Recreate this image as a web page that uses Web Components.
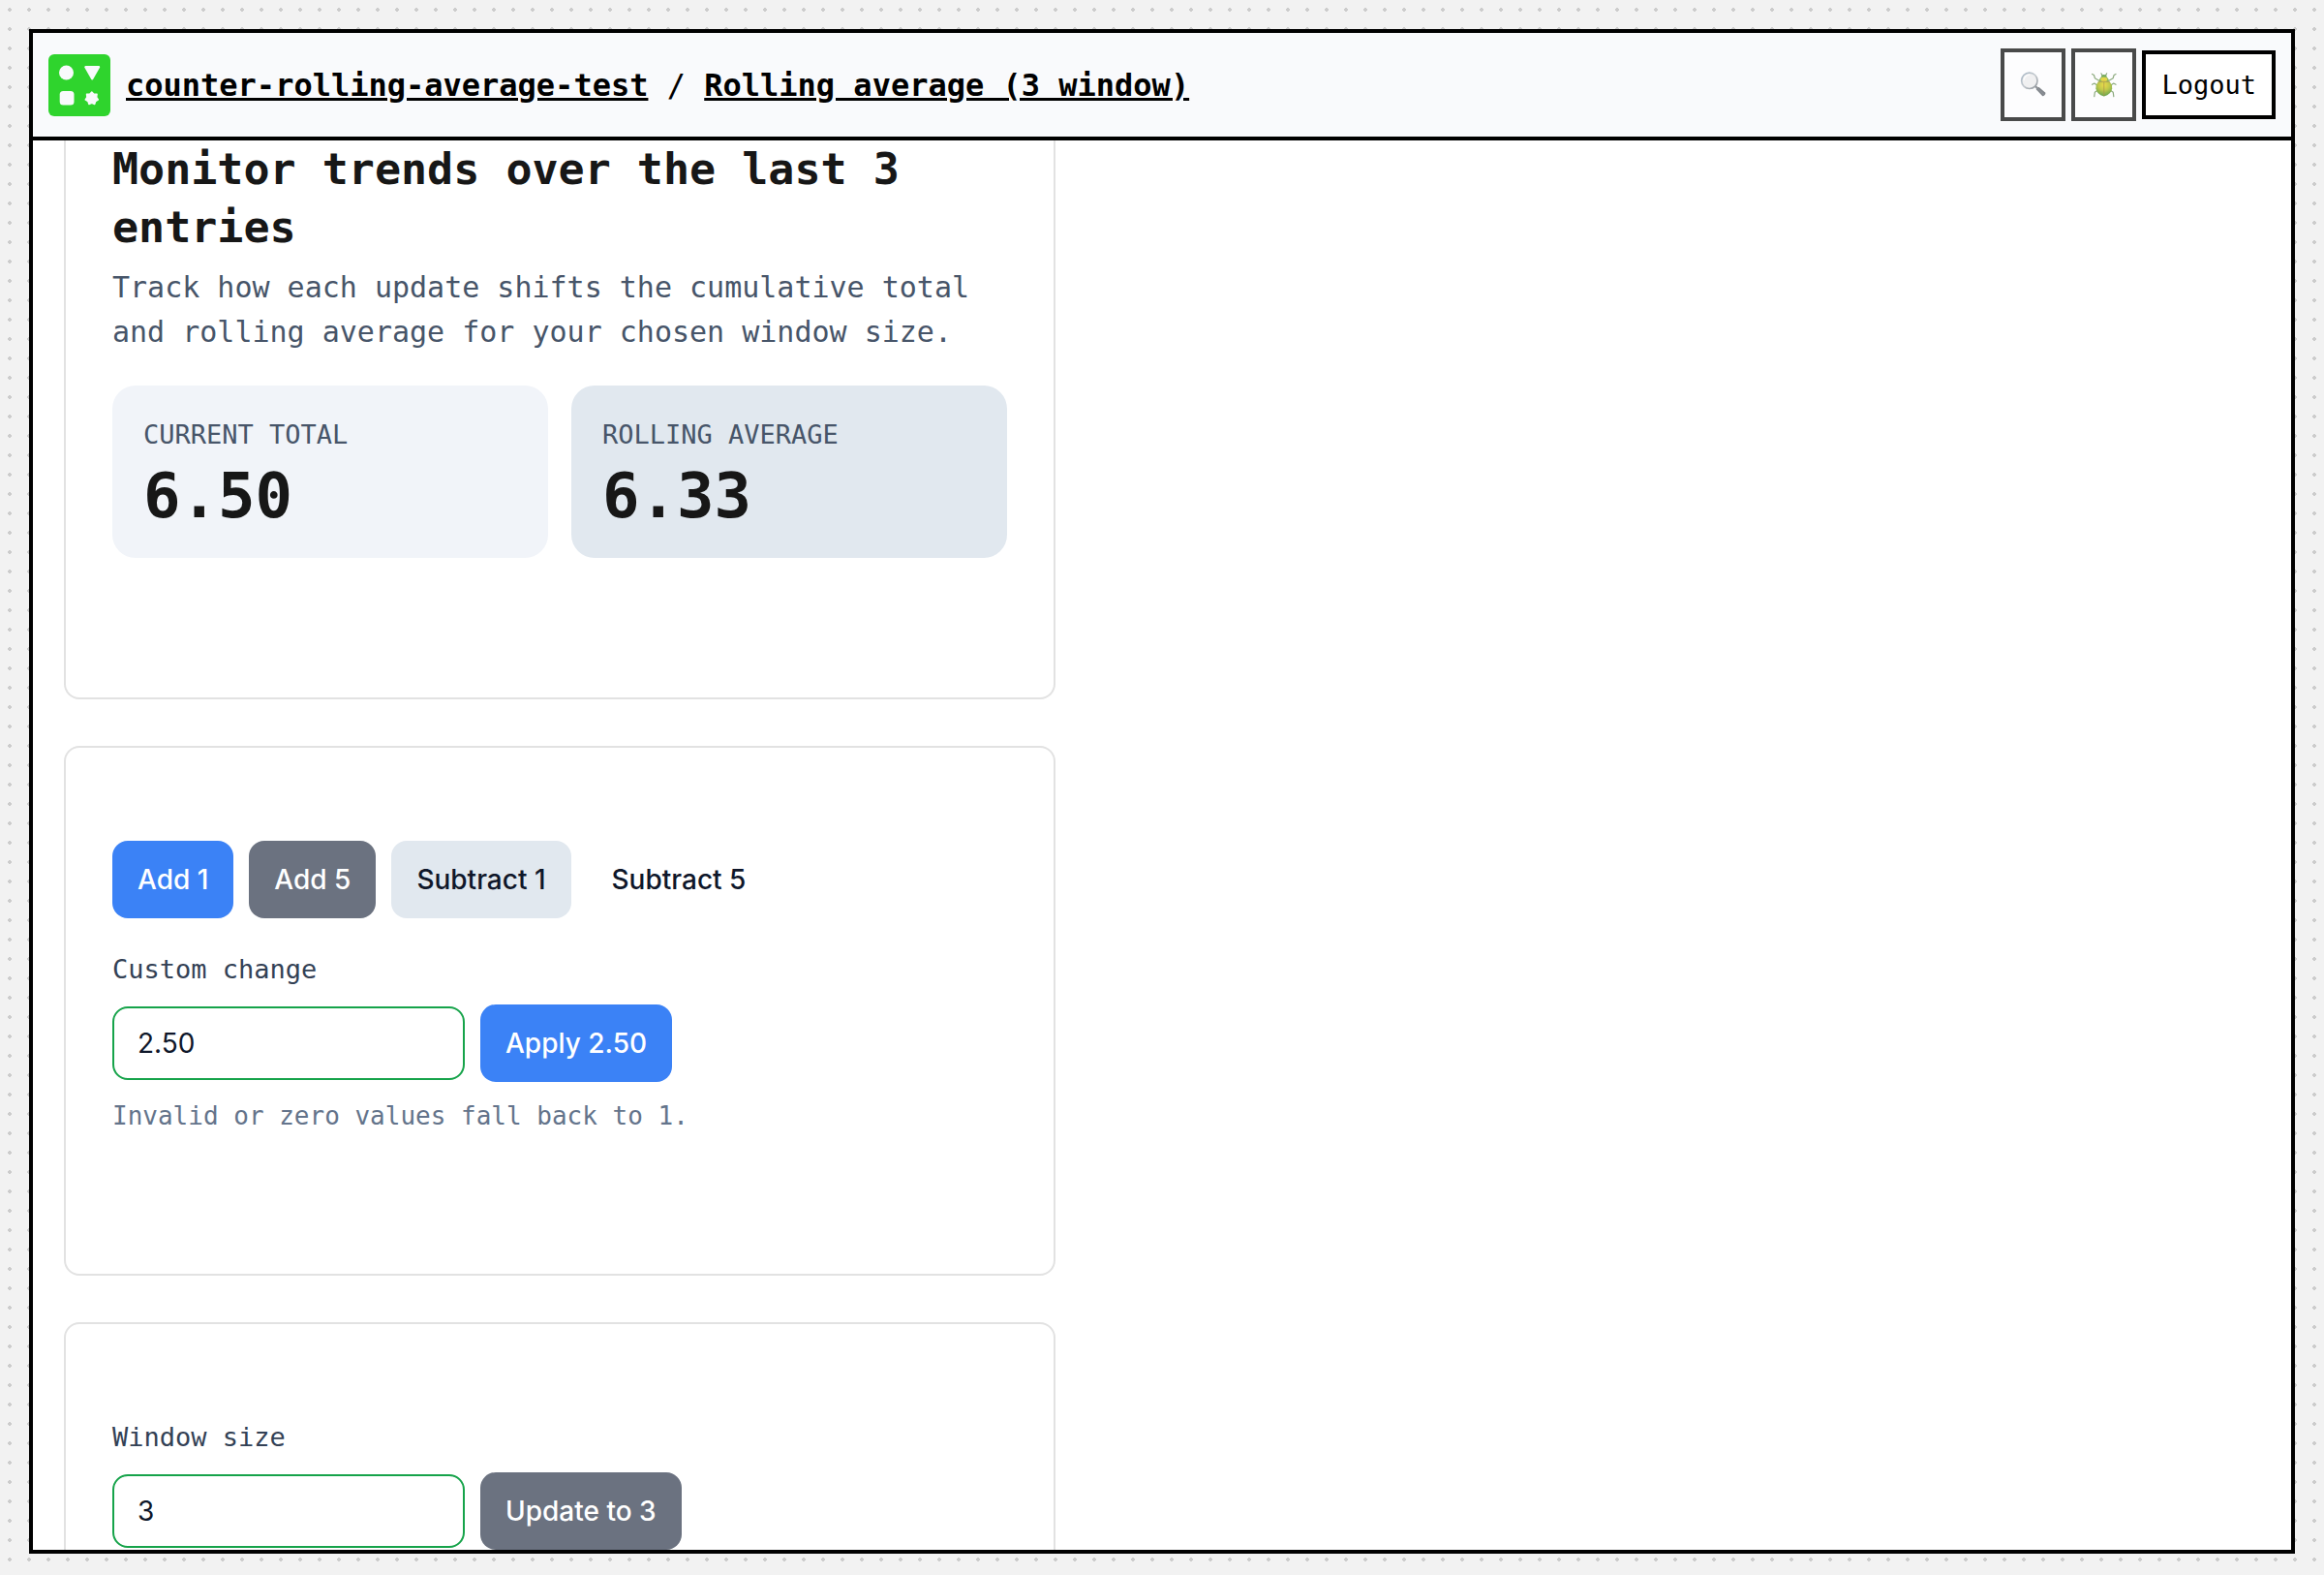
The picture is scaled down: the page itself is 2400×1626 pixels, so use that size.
<!DOCTYPE html>
<html lang="en">
<head>
<meta charset="utf-8">
<title>Rolling average (3 window)</title>
<style>
  body { margin: 0; font-family: "DejaVu Sans Mono", "Liberation Mono", monospace; color: #171717; }
</style>
</head>
<body>
<app-frame>
  <app-header slot="header"></app-header>
  <app-card continued>
    <summary-intro>
      <span slot="title">Monitor trends over the last 3 entries</span>
      <span slot="text">Track how each update shifts the cumulative total and rolling average for your chosen window size.</span>
    </summary-intro>
    <stat-row>
      <stat-tile label="Current total" value="6.50"></stat-tile>
      <stat-tile label="Rolling average" value="6.33" strong></stat-tile>
    </stat-row>
  </app-card>
  <app-card>
    <button-row>
      <ui-button variant="primary">Add 1</ui-button>
      <ui-button variant="secondary">Add 5</ui-button>
      <ui-button variant="soft">Subtract 1</ui-button>
      <ui-button variant="ghost">Subtract 5</ui-button>
    </button-row>
    <value-field label="Custom change" value="2.50" hint="Invalid or zero values fall back to 1.">
      <ui-button variant="primary">Apply 2.50</ui-button>
    </value-field>
  </app-card>
  <app-card>
    <value-field label="Window size" value="3">
      <ui-button variant="secondary">Update to 3</ui-button>
    </value-field>
  </app-card>
</app-frame>

<script>
const define = (name, render) => customElements.define(name, class extends HTMLElement {
  connectedCallback() {
    if (this.shadowRoot) return;
    this.attachShadow({ mode: "open" }).innerHTML = "<style>*{box-sizing:border-box}:host{display:block;box-sizing:border-box}</style>" + render(this);
  }
});

define("app-frame", () => `
  <style>
    :host {
      display: flex; height: 100vh; padding: 30px 30px 22px;
      background: #f2f2f2 radial-gradient(circle at 10px 10px, #cccccc 2px, transparent 2px) 0 0 / 20px 20px;
    }
    .window { flex: 1; min-width: 0; display: flex; flex-direction: column; border: 4px solid #000; background: #fff; overflow: hidden; }
    main { flex: 1; min-height: 0; overflow: hidden; padding: 0 32px; display: flex; flex-direction: column; gap: 48px; }
  </style>
  <div class="window">
    <slot name="header"></slot>
    <main><slot></slot></main>
  </div>`);

define("app-header", () => `
  <style>
    :host { flex: none; background: #f9fafc; border-bottom: 4px solid #000; padding: 16px; }
    header { display: flex; align-items: center; gap: 16px; color: #000; }
    .logo { width: 64px; height: 64px; flex: none; display: block; }
    nav { flex: 1; font-size: 32px; line-height: 38px; white-space: pre; }
    a { color: inherit; font-weight: 700; text-decoration-thickness: 3px; }
    .actions { display: flex; align-items: center; gap: 6px; }
    button { font: inherit; font-size: 27px; line-height: 31px; color: #000; background: #fff; border: 4px solid #000; border-radius: 0; padding: 16px; margin: 0; }
    .icon { padding: 20px 16px; opacity: .7; }
    .icon svg { display: block; width: 27px; height: 27px; }
  </style>
  <header>
    <svg class="logo" viewBox="0 0 64 64" aria-hidden="true">
      <rect width="64" height="64" rx="6" fill="#2fd42d"/>
      <g fill="#f9fafc" stroke="#f9fafc" stroke-linejoin="round">
        <circle cx="18.5" cy="19" r="7.5" stroke="none"/>
        <path d="M38.4 13.2H52L45.2 25.2Z" stroke-width="2.4"/>
        <rect x="11.7" y="38" width="14.8" height="14.6" rx="3.6" stroke="none"/>
        <path d="M44.8 38.9L47 41.2L50.1 41.3L49.7 44.4L51.4 47L48.7 48.6L47.7 51.5L44.8 50.4L41.9 51.5L40.9 48.6L38.2 47L39.9 44.4L39.5 41.3L42.6 41.2Z" stroke-width="1.4"/>
      </g>
    </svg>
    <nav aria-label="Breadcrumb"><a href="#space">counter-rolling-average-test</a> / <a href="#pattern">Rolling average (3 window)</a></nav>
    <div class="actions">
      <button class="icon" type="button" aria-label="Search">
        <svg viewBox="0 0 28 28">
          <defs>
            <linearGradient id="rim" x1="0" y1="0" x2="1" y2="1"><stop offset="0" stop-color="#8399ad"/><stop offset=".5" stop-color="#aeb5bc"/><stop offset="1" stop-color="#626970"/></linearGradient>
            <linearGradient id="grip" x1="0" y1="1" x2="1" y2="0"><stop offset="0" stop-color="#15191d"/><stop offset=".5" stop-color="#5d646b"/><stop offset="1" stop-color="#171b1f"/></linearGradient>
          </defs>
          <path d="M16 15L19 18" stroke="#686e74" stroke-width="2.4"/>
          <path d="M17.3 18.9Q18.4 16.7 20.4 16.6L27 22.3Q28 23.4 26.7 25Q25.2 26.7 24 25.8Z" fill="url(#grip)"/>
          <circle cx="10.2" cy="9.6" r="8.5" fill="#ededed" stroke="url(#rim)" stroke-width="1.7"/>
          <path d="M4.2 9.2A6.2 6.2 0 0 1 10.5 3.3" fill="none" stroke="#fff" stroke-width="1.3"/>
        </svg>
      </button>
      <button class="icon" type="button" aria-label="Debug">
        <svg viewBox="0 0 28 28">
          <defs>
            <radialGradient id="shell" cx=".5" cy=".25" r=".75"><stop offset="0" stop-color="#e8cf00"/><stop offset=".45" stop-color="#a9b500"/><stop offset="1" stop-color="#237d09"/></radialGradient>
          </defs>
          <g fill="none" stroke="#5d8747" stroke-width="1.2" stroke-linecap="round" stroke-linejoin="round">
            <path d="M9 9.5L4.6 7L3.6 3.6L1.6 2.5M19.6 9.5L24 7L25 3.6L27 2.5"/>
            <path d="M7 14.5L4 12.5L1.6 13.8M21.6 14.5L24.6 12.5L27 13.8"/>
            <path d="M7.5 20L4.5 22L3.9 26.5M21.1 20L24.1 22L24.7 26.5"/>
            <path d="M12.5 4L11.3 1.8M16.1 4L17.3 1.8"/>
          </g>
          <path d="M11 6Q11.5 3 14.3 3Q17.1 3 17.6 6Z" fill="#3e8a18"/>
          <path d="M8.8 11Q9 5.2 14.3 5.2Q19.6 5.2 19.8 11Z" fill="#62991a"/>
          <ellipse cx="14.3" cy="8.2" rx="3.6" ry="2.2" fill="#ddc900"/>
          <path d="M8 11Q14.3 9.5 20.6 11Q23.2 14 23 18Q22.2 24.5 14.3 26.5Q6.4 24.5 5.6 18Q5.4 14 8 11Z" fill="url(#shell)"/>
          <path d="M8 11.2Q14.3 9.8 20.6 11.2M14.3 11V26" fill="none" stroke="#8a6f00" stroke-width=".8"/>
        </svg>
      </button>
      <button type="button">Logout</button>
    </div>
  </header>`);

define("app-card", () => `
  <style>
    :host { flex: none; max-width: 1024px; border: 2px solid #e2e2e2; border-radius: 16px; padding: 96px 48px 144px; }
    :host([continued]) { border-top: 0; border-radius: 0 0 16px 16px; padding-top: 0; }
  </style>
  <slot></slot>`);

define("summary-intro", () => `
  <style>
    h2, p { margin: 0; }
    h2 { font-size: 45px; line-height: 60px; color: #171717; margin-bottom: 9px; }
    p { font-size: 30px; line-height: 46px; color: #475569; }
  </style>
  <h2><slot name="title"></slot></h2>
  <p><slot name="text"></slot></p>`);

define("stat-row", () => `
  <style>:host { display: grid; grid-template-columns: 1fr 1fr; gap: 24px; margin-top: 32px; }</style>
  <slot></slot>`);

define("stat-tile", el => `
  <style>
    :host { background: #f1f4f9; border-radius: 24px; padding: 32px; display: flex; flex-direction: column; gap: 12px; }
    :host([strong]) { background: #e1e8ef; }
    .label { font-size: 27px; line-height: 38px; color: #475569; text-transform: uppercase; }
    .value { font-size: 64px; line-height: 64px; font-weight: 700; color: #171717; }
  </style>
  <div class="label">${el.getAttribute("label")}</div>
  <div class="value">${el.getAttribute("value")}</div>`);

define("button-row", () => `
  <style>:host { display: flex; flex-wrap: wrap; gap: 16px; margin-bottom: 32px; }</style>
  <slot></slot>`);

define("ui-button", () => `
  <style>
    :host { flex: none; --bg: transparent; --fg: #0f172a; }
    :host([variant="primary"]) { --bg: #3b82f6; --fg: #fff; }
    :host([variant="secondary"]) { --bg: #6b7280; --fg: #fff; }
    :host([variant="soft"]) { --bg: #e1e8ef; }
    button { display: block; margin: 0; border: 0; border-radius: 16px; padding: 20px 26px; font: 500 28px/40px Inter, sans-serif; color: var(--fg); background: var(--bg); }
  </style>
  <button type="button"><slot></slot></button>`);

define("value-field", el => `
  <style>
    label { display: block; font-size: 27px; line-height: 41px; color: #334155; margin-bottom: 16px; }
    .row { display: flex; align-items: center; gap: 16px; }
    input { width: 364px; height: 76px; margin: 0; padding: 0 24px; border: 2px solid #16a34a; border-radius: 16px; background: #fff; color: #0f172a; font: 400 28px/40px Inter, sans-serif; }
    p { margin: 16px 0 0; font-size: 26px; line-height: 38px; color: #64748b; }
  </style>
  <label for="value">${el.getAttribute("label")}</label>
  <div class="row"><input id="value" type="text" inputmode="decimal" value="${el.getAttribute("value")}"><slot></slot></div>
  ${el.hasAttribute("hint") ? `<p>${el.getAttribute("hint")}</p>` : ""}`);
</script>
</body>
</html>
